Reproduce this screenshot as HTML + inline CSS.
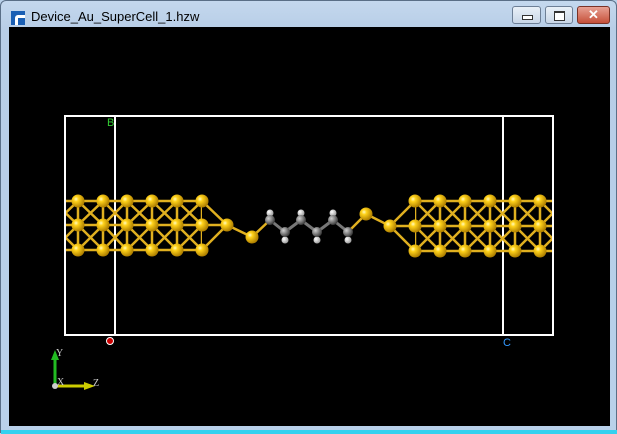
<!DOCTYPE html>
<html><head><meta charset="utf-8"><style>
html,body{margin:0;padding:0;width:617px;height:433px;overflow:hidden;background:#b9d1ea;font-family:"Liberation Sans",sans-serif}
.win{position:absolute;left:0;top:0;width:617px;height:433px;background:linear-gradient(#c4d8ee,#b7cde6 30px,#b9d1ea);border-radius:6px 6px 0 0;box-sizing:border-box;border:1px solid #5a6f87}
.title{position:absolute;left:30px;top:8px;font-size:13px;color:#000}
.icon{position:absolute;left:10px;top:10px;width:14px;height:14px;background:#1a5fb4}
.icon:after{content:"";position:absolute;left:4px;top:4px;width:10px;height:10px;background:#fff;border-radius:3px 0 0 0}
.icon:before{content:"";position:absolute;left:7px;top:7px;width:7px;height:7px;background:#1a5fb4;z-index:1}
.btn{position:absolute;top:5px;height:18px;border:1px solid #6d7f96;border-radius:3px;box-sizing:border-box;background:linear-gradient(#e9f0f8,#c9d7e8)}
.client{position:absolute;left:8px;top:26px;width:601px;height:399px;background:#000}
.bot{position:absolute;left:0;top:429px;width:617px;height:4px;background:#35d1ef}
</style></head><body>
<div class="win">
<div class="icon"></div>
<div class="title">Device_Au_SuperCell_1.hzw</div>
<div class="btn" style="left:511px;width:29px"><div style="position:absolute;left:9px;top:8px;width:9px;height:3px;border:1px solid #333;background:#fff"></div></div>
<div class="btn" style="left:544px;width:28px"><div style="position:absolute;left:8px;top:4px;width:9px;height:7px;border:1px solid #333;border-top-width:2px;background:#fff"></div></div>
<div class="btn" style="left:576px;width:33px;background:linear-gradient(#e7a193,#c6503a);border-color:#7a3226;color:#fff;font-weight:bold;text-align:center;font-size:13px;line-height:16px">✕</div>
<div class="client"></div>
<div class="bot"></div>
</div>
<svg id="s" width="617" height="433" style="position:absolute;left:0;top:0">
<defs>
<radialGradient id="au" cx="35%" cy="35%" r="65%"><stop offset="0" stop-color="#fffbc0"/><stop offset="0.3" stop-color="#ffd21a"/><stop offset="1" stop-color="#b08000"/></radialGradient>
<radialGradient id="c" cx="35%" cy="35%" r="65%"><stop offset="0" stop-color="#d0d0d0"/><stop offset="1" stop-color="#3c3c3c"/></radialGradient>
<radialGradient id="h" cx="35%" cy="35%" r="65%"><stop offset="0" stop-color="#fff"/><stop offset="1" stop-color="#a0a0a0"/></radialGradient>
<clipPath id="cl"><rect x="66" y="180" width="136" height="90"/></clipPath>
<clipPath id="cr"><rect x="415" y="180" width="137" height="90"/></clipPath>
</defs>
<g stroke="#fff" stroke-width="2" fill="none">
<rect x="65" y="116" width="488" height="219"/>
<line x1="115" y1="116" x2="115" y2="335"/><line x1="503" y1="116" x2="503" y2="335"/>
</g>
<g id="bl" stroke="#e0b020" stroke-width="2.5" clip-path="url(#cl)"></g>
<g id="br" stroke="#e0b020" stroke-width="2.5" clip-path="url(#cr)"></g>
<g id="bonds" stroke="#e0b020" stroke-width="2.5"></g>
<g id="atoms"></g>
<text x="107" y="126" fill="#3c3" font-size="11" font-family="Liberation Sans">B</text>
<circle cx="110" cy="341" r="3.5" fill="#c00" stroke="#fff" stroke-width="1"/>
<text x="503" y="346" fill="#39f" font-size="11" font-family="Liberation Sans">C</text>
<line x1="55" y1="386" x2="55" y2="358" stroke="#2b2" stroke-width="3"/>
<polygon points="51,360 59,360 55,350" fill="#2b2"/>
<line x1="55" y1="386" x2="86" y2="386" stroke="#cc0" stroke-width="3"/>
<polygon points="84,382 84,390 95,386" fill="#cc0"/>
<circle cx="55" cy="386" r="3" fill="#ccc"/>
<text x="56" y="356" fill="#ccc" font-size="10" font-family="Liberation Serif">Y</text>
<text x="57" y="385" fill="#ccc" font-size="10" font-family="Liberation Serif">X</text>
<text x="93" y="386" fill="#ccc" font-size="10" font-family="Liberation Serif">Z</text>
</svg>
<script>
var ns="http://www.w3.org/2000/svg",A=document.getElementById("atoms");
function L(g,a,b,c,d,col,w){var e=document.createElementNS(ns,"line");e.setAttribute("x1",a);e.setAttribute("y1",b);e.setAttribute("x2",c);e.setAttribute("y2",d);if(col){e.setAttribute("stroke",col);e.setAttribute("stroke-width",w||3)}g.appendChild(e)}
function C(x,y,r,f){var e=document.createElementNS(ns,"circle");e.setAttribute("cx",x);e.setAttribute("cy",y);e.setAttribute("r",r);e.setAttribute("fill","url(#"+f+")");A.appendChild(e)}
function block(g,cols,rows,x0,x1){
 rows.forEach(function(y){L(g,x0,y,x1,y)});
 cols.forEach(function(x){L(g,x,rows[0],x,rows[2])});
 var d=cols[1]-cols[0];var cs=[cols[0]-d].concat(cols).concat([cols[cols.length-1]+d]);
 for(var i=0;i<cs.length-1;i++)for(var r=0;r<2;r++){L(g,cs[i],rows[r],cs[i+1],rows[r+1]);L(g,cs[i],rows[r+1],cs[i+1],rows[r])}
}
var lc=[78,103,127,152,177,202],lr=[201,225,250];
var rc=[415,440,465,490,515,540],rr=[201,226,251];
block(document.getElementById("bl"),lc,lr,60,210);
block(document.getElementById("br"),rc,rr,405,560);
var B=document.getElementById("bonds");
L(B,202,201,227,225);L(B,202,250,227,225);L(B,202,225,227,225);L(B,227,225,252,237);
L(B,252,237,270,220);
L(B,348,232,366,214);
L(B,366,214,390,226);L(B,390,226,415,201);L(B,390,226,415,226);L(B,390,226,415,251);
var ch=[[270,220,213],[285,232,240],[301,220,213],[317,232,240],[333,220,213],[348,232,240]];
for(var i=0;i<5;i++)L(B,ch[i][0],ch[i][1],ch[i+1][0],ch[i+1][1],"#777",3);
ch.forEach(function(c){L(B,c[0],c[1],c[0],c[2],"#999",2)});
lc.forEach(function(x){lr.forEach(function(y){C(x,y,6.5,"au")})});
rc.forEach(function(x){rr.forEach(function(y){C(x,y,6.5,"au")})});
C(227,225,6.5,"au");C(252,237,6.5,"au");C(366,214,6.5,"au");C(390,226,6.5,"au");
ch.forEach(function(c){C(c[0],c[2],3.5,"h");C(c[0],c[1],5,"c")});
</script>
</body></html>
